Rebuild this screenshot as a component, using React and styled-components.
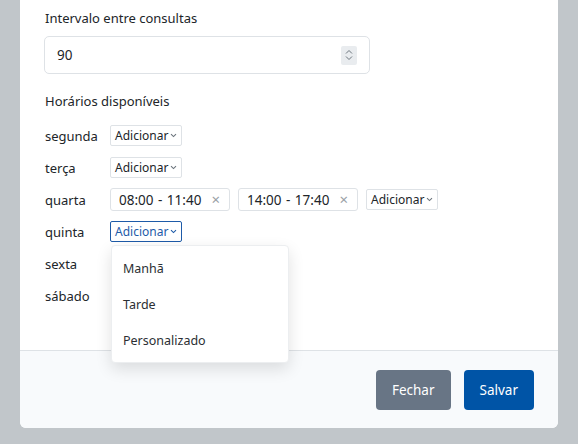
import React from 'react';
import styled, { createGlobalStyle } from 'styled-components';

const Global = createGlobalStyle`
  html, body {
    margin: 0;
    padding: 0;
    background: #c1c6ca;
    font-family: "Noto Sans", "Open Sans", sans-serif;
    color: #212529;
  }
`;

const days = [
  { name: 'segunda', slots: [] },
  { name: 'terça', slots: [] },
  { name: 'quarta', slots: ['08:00 - 11:40', '14:00 - 17:40'] },
  { name: 'quinta', slots: [], open: true },
  { name: 'sexta', slots: [], hidden: true },
  { name: 'sábado', slots: [], hidden: true },
];

const Chevron = () => (
  <svg width="7" height="5" viewBox="0 0 7 5">
    <path d="M1 1.2 L3.5 3.6 L6 1.2" fill="none" stroke="currentColor" strokeWidth="1.1" />
  </svg>
);

const App = () => {
  return (
    <>
      <Global />
      <Page>
        <Modal>
          <Body>
            <Label>Intervalo entre consultas</Label>
            <InputBox>
              <span>90</span>
              <Spinner>
                <svg width="10" height="16" viewBox="0 0 10 16">
                  <path d="M2 6.5 L5 3.5 L8 6.5 M2 9.5 L5 12.5 L8 9.5" fill="none" stroke="#6c757d" strokeWidth="1" />
                </svg>
              </Spinner>
            </InputBox>
            <Section>Horários disponíveis</Section>
            <Rows>
              {days.map((d) => (
                <Row key={d.name}>
                  <Day>{d.name}</Day>
                  {d.slots.map((s) => (
                    <Chip key={s}>
                      {s}
                      <Close>×</Close>
                    </Chip>
                  ))}
                  {!d.hidden && (
                    <SelectWrap>
                      <Select $active={d.open}>
                        Adicionar
                        <Chevron />
                      </Select>
                      {d.open && (
                        <Menu>
                          <Item>Manhã</Item>
                          <Item>Tarde</Item>
                          <Item>Personalizado</Item>
                        </Menu>
                      )}
                    </SelectWrap>
                  )}
                </Row>
              ))}
            </Rows>
          </Body>
          <Footer>
            <Button $variant="secondary">Fechar</Button>
            <Button>Salvar</Button>
          </Footer>
        </Modal>
      </Page>
    </>
  );
};

//Styles
const Page = styled.div`
  padding: 0 20px 16px;
  height: 444px;
  box-sizing: border-box;
  overflow: hidden;
`;

const Modal = styled.div`
  background: #fff;
  border-radius: 0 0 6px 6px;
`;

const Body = styled.div`
  padding: 8px 24px 0 24px;
  height: 350px;
  box-sizing: border-box;
`;

const Label = styled.div`
  font-size: 13px;
  line-height: 21px;
  padding-left: 1px;
  margin-bottom: 7px;
`;

const InputBox = styled.div`
  width: 326px;
  height: 38px;
  box-sizing: border-box;
  border: 1px solid #dee2e6;
  border-radius: 5px;
  display: flex;
  align-items: center;
  justify-content: space-between;
  padding: 0 12px 0 12px;
  font-size: 13.5px;
`;

const Spinner = styled.div`
  width: 16px;
  height: 19px;
  background: #e9ecef;
  border-radius: 2px;
  display: flex;
  align-items: center;
  justify-content: center;
`;

const Section = styled.div`
  font-size: 13px;
  line-height: 21px;
  padding-left: 1px;
  margin-top: 17px;
  margin-bottom: 12px;
`;

const Rows = styled.div`
  display: flex;
  flex-direction: column;
  gap: 9px;
`;

const Row = styled.div`
  display: flex;
  align-items: center;
  gap: 8px;
  min-height: 23px;
`;

const Day = styled.div`
  width: 57px;
  font-size: 13px;
  padding-left: 1px;
`;

const SelectWrap = styled.div`
  position: relative;
`;

const Select = styled.div`
  display: flex;
  align-items: center;
  gap: 2px;
  height: 21px;
  box-sizing: border-box;
  padding: 0 4px 0 4px;
  border: 1px solid ${(p) => (p.$active ? '#1e5ba8' : '#dee2e6')};
  border-radius: 2px;
  font-size: 12px;
  color: ${(p) => (p.$active ? '#1e5ba8' : '#212529')};
  svg {
    color: ${(p) => (p.$active ? '#1e5ba8' : '#6c757d')};
  }
`;

const Chip = styled.div`
  display: flex;
  align-items: center;
  justify-content: space-between;
  width: 120px;
  height: 23px;
  box-sizing: border-box;
  padding: 0 9px 0 8px;
  border: 1px solid #dee2e6;
  border-radius: 3px;
  font-size: 13.5px;
  word-spacing: 1px;
`;

const Close = styled.span`
  color: #9aa0a6;
  font-size: 15px;
  line-height: 1;
`;

const Menu = styled.div`
  position: absolute;
  top: 24px;
  left: 1px;
  width: 176px;
  padding: 4px 0;
  background: #fff;
  border-radius: 4px;
  border: 1px solid #eceef0;
  box-shadow: 0 6px 16px rgba(0, 0, 0, 0.12);
  z-index: 5;
`;

const Item = styled.div`
  height: 36px;
  display: flex;
  align-items: center;
  padding-left: 11px;
  font-size: 12.5px;
  color: #2b2f33;
`;

const Footer = styled.div`
  background: #f8fafc;
  border-top: 1px solid #dee2e6;
  border-radius: 0 0 6px 6px;
  height: 78px;
  box-sizing: border-box;
  display: flex;
  justify-content: flex-end;
  align-items: center;
  gap: 13px;
  padding: 0 24px 0 0;
`;

const Button = styled.button`
  height: 40px;
  padding: 0 16px;
  border: none;
  border-radius: 4px;
  font-family: inherit;
  font-size: 13.5px;
  color: #fff;
  background: ${(p) => (p.$variant === 'secondary' ? '#687585' : '#0054a6')};
`;

export default App;
